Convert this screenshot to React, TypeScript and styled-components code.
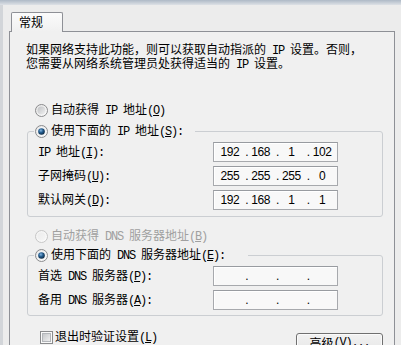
import React, { useId } from "react";
import styled, { createGlobalStyle } from "styled-components";

const GlobalStyle = createGlobalStyle`
  html, body { margin: 0; padding: 0; background: #ffffff; }
  body {
    font-family: "Noto Sans CJK SC", "Liberation Sans", sans-serif;
    font-size: 12px;
    color: #000;
  }
`;

const Screen = styled.div`
  width: 401px;
  height: 345px;
  display: flex;
  flex-direction: column;
  overflow: hidden;
  background: #ececec;
`;

const TopEdge = styled.div`
  height: 5px;
  flex: none;
  background: linear-gradient(#aeb9c6, #dde1e6);
`;

const Body = styled.div`
  flex: 1;
  min-height: 0;
  display: flex;
  flex-direction: column;
  padding: 7px 6px 0 6px;
  border-left: 3px solid #d2d5d9;
`;

const TabStrip = styled.div`
  display: flex;
  padding-left: 2px;
`;

const Tab = styled.div`
  position: relative;
  z-index: 1;
  width: 52px;
  height: 20px;
  box-sizing: border-box;
  margin-bottom: -1px;
  border: 1px solid #8e9096;
  border-bottom: none;
  border-radius: 2px 2px 0 0;
  background: linear-gradient(#fbfbfb, #f0f0f0);
  padding: 0 0 2px 7px;
  display: flex;
  align-items: center;
  line-height: 12px;
`;

const Panel = styled.div`
  flex: 1;
  display: flex;
  flex-direction: column;
  border: 1px solid #8e9096;
  border-bottom: none;
  background: #f0f0f0;
  padding: 11px 11px 0 16px;
`;

const Desc = styled.p`
  margin: 0;
  line-height: 12px;
  white-space: nowrap;
`;

const Row = styled.div<{ $indent?: number; $mt?: number; $disabled?: boolean }>`
  display: flex;
  align-items: center;
  height: 16px;
  line-height: 16px;
  white-space: nowrap;
  padding-left: ${(p) => p.$indent ?? 0}px;
  margin-top: ${(p) => p.$mt ?? 0}px;
  color: ${(p) => (p.$disabled ? "#a0a0a0" : "#000")};
`;

const IconSlot = styled.span<{ $gap: number }>`
  display: flex;
  margin-right: ${(p) => p.$gap}px;
`;

const Group = styled.fieldset<{ $mt: number; $pb: number }>`
  margin: ${(p) => p.$mt}px 0 0 1px;
  padding: 3px 11px ${(p) => p.$pb}px 6px;
  border: 1px solid #cbced2;
  border-radius: 3px;
  min-width: 0;
`;

const Legend = styled.legend<{ $gap: number }>`
  padding: 0 ${(p) => p.$gap}px 0 1px;
  line-height: 16px;
`;

const FieldGrid = styled.div`
  display: grid;
  grid-template-columns: 175px 125px;
  row-gap: 4px;
  align-items: center;
  padding-left: 4px;
`;

const Label = styled.span`
  line-height: 16px;
  white-space: nowrap;
`;

const IpBox = styled.div`
  height: 20px;
  box-sizing: border-box;
  border: 1px solid #a7a9ad;
  border-top-color: #989ba0;
  background: #f8f8f8;
  box-shadow: inset 1px 1px 0 #ffffff;
  display: grid;
  grid-template-columns: 1fr 4px 1fr 4px 1fr 4px 1fr;
  align-items: center;
  padding-left: 4px;
  font-family: "Liberation Sans", Arial, sans-serif;
  font-size: 12px;
  letter-spacing: -0.4px;
  line-height: 14px;
`;

const Octet = styled.span`
  text-align: center;
  padding-right: 3px;
`;

const Dot = styled.span`
  text-align: center;
`;

const BottomRow = styled.div`
  display: flex;
  justify-content: space-between;
  align-items: flex-start;
  margin-top: 13px;
`;

const Button = styled.button`
  width: 87px;
  height: 23px;
  margin-top: 4px;
  box-sizing: border-box;
  border: 1px solid #707070;
  border-radius: 3px;
  background: linear-gradient(#f2f2f2 0%, #ebebeb 50%, #dddddd 51%, #cfcfcf 100%);
  box-shadow: inset 0 0 0 1px #fbfbfb;
  font-family: inherit;
  font-size: 12px;
  color: #000;
  padding: 3px 0 0 0;
  line-height: 12px;
  display: flex;
  justify-content: center;
  align-items: flex-start;
  white-space: nowrap;
`;

const Lat = styled.span`
  font-family: "Liberation Mono", "DejaVu Sans Mono", monospace;
  letter-spacing: -1.2px;
`;

function Txt({ s }: { s: string }) {
  const out: React.ReactNode[] = [];
  const re = /&(.)|([\x00-\x25\x27-\x7f]+)|([^\x00-\x7f]+)/g;
  let m: RegExpExecArray | null;
  let k = 0;
  while ((m = re.exec(s))) {
    if (m[1] !== undefined)
      out.push(
        <Lat key={k++}>
          <u>{m[1]}</u>
        </Lat>
      );
    else if (m[2] !== undefined) out.push(<Lat key={k++}>{m[2]}</Lat>);
    else out.push(<React.Fragment key={k++}>{m[3]}</React.Fragment>);
  }
  return <>{out}</>;
}

function RadioIcon({ checked, disabled }: { checked?: boolean; disabled?: boolean }) {
  const id = useId().replace(/:/g, "");
  return (
    <svg width="13" height="13" viewBox="0 0 13 13">
      <defs>
        <linearGradient id={id + "o"} x1="0" y1="0" x2="1" y2="1">
          <stop offset="0" stopColor={disabled ? "#f2f2f2" : "#e4e4e4"} />
          <stop offset="1" stopColor={disabled ? "#fbfbfb" : "#fdfdfd"} />
        </linearGradient>
        <linearGradient id={id + "i"} x1="0" y1="0" x2="1" y2="1">
          <stop offset="0" stopColor={disabled ? "#ececec" : "#bfc1c4"} />
          <stop offset="1" stopColor={disabled ? "#f6f6f6" : "#f1f1f1"} />
        </linearGradient>
        <radialGradient id={id + "d"} cx="0.4" cy="0.35" r="0.7">
          <stop offset="0" stopColor="#86b6df" />
          <stop offset="0.45" stopColor="#235d90" />
          <stop offset="1" stopColor="#0c2338" />
        </radialGradient>
      </defs>
      <circle
        cx="6.5"
        cy="6.5"
        r="6"
        fill={`url(#${id}o)`}
        stroke={disabled ? "#c6c6c6" : "#8a8b8d"}
      />
      {checked ? (
        <>
          <circle cx="6.5" cy="6.5" r="4.2" fill="#f4f6f8" />
          <circle cx="6.5" cy="6.5" r="3.3" fill={`url(#${id}d)`} />
        </>
      ) : (
        <circle cx="6.5" cy="6.5" r="4" fill={`url(#${id}i)`} />
      )}
    </svg>
  );
}

function CheckIcon() {
  const id = useId().replace(/:/g, "");
  return (
    <svg width="13" height="13" viewBox="0 0 13 13">
      <defs>
        <linearGradient id={id + "c"} x1="0" y1="0" x2="1" y2="1">
          <stop offset="0" stopColor="#c3c5c8" />
          <stop offset="1" stopColor="#f2f2f2" />
        </linearGradient>
      </defs>
      <rect x="0.5" y="0.5" width="12" height="12" fill="#f9f9f9" stroke="#8a8b8d" />
      <rect x="2.5" y="2.5" width="8" height="8" fill={`url(#${id}c)`} stroke="#b3b6ba" />
    </svg>
  );
}

function Radio({
  label,
  checked,
  disabled,
  indent,
  mt,
}: {
  label: string;
  checked?: boolean;
  disabled?: boolean;
  indent?: number;
  mt?: number;
}) {
  return (
    <Row $indent={indent} $mt={mt} $disabled={disabled}>
      <IconSlot $gap={3}>
        <RadioIcon checked={checked} disabled={disabled} />
      </IconSlot>
      <span>
        <Txt s={label} />
      </span>
    </Row>
  );
}

function IpField({ value }: { value?: string[] }) {
  const v = value ?? ["", "", "", ""];
  return (
    <IpBox>
      <Octet>{v[0]}</Octet>
      <Dot>.</Dot>
      <Octet>{v[1]}</Octet>
      <Dot>.</Dot>
      <Octet>{v[2]}</Octet>
      <Dot>.</Dot>
      <Octet>{v[3]}</Octet>
    </IpBox>
  );
}

const ipRows: { label: string; value: string[] }[] = [
  { label: "IP 地址(&I):", value: ["192", "168", "1", "102"] },
  { label: "子网掩码(&U):", value: ["255", "255", "255", "0"] },
  { label: "默认网关(&D):", value: ["192", "168", "1", "1"] },
];

const dnsRows = ["首选 DNS 服务器(&P):", "备用 DNS 服务器(&A):"];

export default function App() {
  return (
    <>
      <GlobalStyle />
      <Screen>
        <TopEdge />
        <Body>
          <TabStrip>
            <Tab>常规</Tab>
          </TabStrip>
          <Panel>
            <Desc>
              <Txt s="如果网络支持此功能，则可以获取自动指派的 IP 设置。否则，" />
              <br />
              <Txt s="您需要从网络系统管理员处获得适当的 IP 设置。" />
            </Desc>

            <Radio label="自动获得 IP 地址(&O)" indent={9} mt={31} />

            <Group $mt={5} $pb={6}>
              <Legend $gap={12}>
                <Radio label="使用下面的 IP 地址(&S):" checked />
              </Legend>
              <FieldGrid>
                {ipRows.map((r) => (
                  <React.Fragment key={r.label}>
                    <Label>
                      <Txt s={r.label} />
                    </Label>
                    <IpField value={r.value} />
                  </React.Fragment>
                ))}
              </FieldGrid>
            </Group>

            <Radio label="自动获得 DNS 服务器地址(&B)" indent={9} mt={11} disabled />

            <Group $mt={3} $pb={5}>
              <Legend $gap={23}>
                <Radio label="使用下面的 DNS 服务器地址(&E):" checked />
              </Legend>
              <FieldGrid>
                {dnsRows.map((l) => (
                  <React.Fragment key={l}>
                    <Label>
                      <Txt s={l} />
                    </Label>
                    <IpField />
                  </React.Fragment>
                ))}
              </FieldGrid>
            </Group>

            <BottomRow>
              <Row $indent={14}>
                <IconSlot $gap={2}>
                  <CheckIcon />
                </IconSlot>
                <span>
                  <Txt s="退出时验证设置(&L)" />
                </span>
              </Row>
              <Button type="button">
                <Txt s="高级(&V)..." />
              </Button>
            </BottomRow>
          </Panel>
        </Body>
      </Screen>
    </>
  );
}
